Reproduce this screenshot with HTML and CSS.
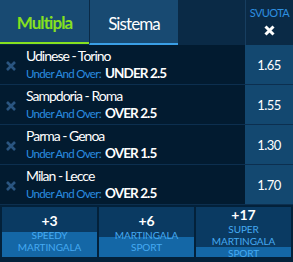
FILE: index.html
```html
<!DOCTYPE html>
<html lang="it">
<head>
<meta charset="utf-8">
<title>Schedina</title>
<link rel="stylesheet" href="styles.css">
</head>
<body>
<div class="slip">
  <div class="header">
    <div class="tab tab-active">Multipla</div>
    <div class="tab tab-system">Sistema</div>
    <div class="spacer"></div>
    <div class="clear">
      <span class="clear-label">SVUOTA</span>
      <svg class="clear-x" width="11" height="11" viewBox="0 0 11 11"><path d="M1.5 1.5 L9.5 9.5 M9.5 1.5 L1.5 9.5" stroke="#ffffff" stroke-width="3" stroke-linecap="butt"/></svg>
    </div>
  </div>
  <div class="rows">
    <div class="row">
      <div class="remove"><svg width="10" height="10" viewBox="0 0 10 10"><path d="M1 1 L9 9 M9 1 L1 9" stroke="#2a5580" stroke-width="2.6"/></svg></div>
      <div class="info">
        <div class="match">Udinese - Torino</div>
        <div class="market"><span class="mk">Under And Over:</span> <span class="pick">UNDER 2.5</span></div>
      </div>
      <div class="odd">1.65</div>
    </div>
    <div class="row">
      <div class="remove"><svg width="10" height="10" viewBox="0 0 10 10"><path d="M1 1 L9 9 M9 1 L1 9" stroke="#2a5580" stroke-width="2.6"/></svg></div>
      <div class="info">
        <div class="match">Sampdoria - Roma</div>
        <div class="market"><span class="mk">Under And Over:</span> <span class="pick">OVER 2.5</span></div>
      </div>
      <div class="odd">1.55</div>
    </div>
    <div class="row">
      <div class="remove"><svg width="10" height="10" viewBox="0 0 10 10"><path d="M1 1 L9 9 M9 1 L1 9" stroke="#2a5580" stroke-width="2.6"/></svg></div>
      <div class="info">
        <div class="match">Parma - Genoa</div>
        <div class="market"><span class="mk">Under And Over:</span> <span class="pick">OVER 1.5</span></div>
      </div>
      <div class="odd">1.30</div>
    </div>
    <div class="row">
      <div class="remove"><svg width="10" height="10" viewBox="0 0 10 10"><path d="M1 1 L9 9 M9 1 L1 9" stroke="#2a5580" stroke-width="2.6"/></svg></div>
      <div class="info">
        <div class="match">Milan - Lecce</div>
        <div class="market"><span class="mk">Under And Over:</span> <span class="pick">OVER 2.5</span></div>
      </div>
      <div class="odd">1.70</div>
    </div>
  </div>
  <div class="promos">
    <div class="promo" style="--fill:25px">
      <div class="promo-num">+3</div>
      <div class="promo-label">SPEEDY</div>
      <div class="promo-label">MARTINGALA</div>
    </div>
    <div class="promo" style="--fill:20px">
      <div class="promo-num">+6</div>
      <div class="promo-label">MARTINGALA</div>
      <div class="promo-label">SPORT</div>
    </div>
    <div class="promo" style="--fill:10px">
      <div class="promo-num">+17</div>
      <div class="promo-label">SUPER</div>
      <div class="promo-label">MARTINGALA</div>
      <div class="promo-label">SPORT</div>
    </div>
  </div>
</div>
</body>
</html>
```
FILE: styles.css
```css
html, body {
  margin: 0;
  padding: 0;
  background: #021b30;
}
body {
  font-family: Lato, "Noto Sans", sans-serif;
  width: 293px;
  height: 262px;
  overflow: hidden;
}
.slip {
  display: flex;
  flex-direction: column;
  width: 293px;
}
.header {
  display: flex;
  align-items: flex-start;
  height: 45px;
  background: #0a2a46;
}
.tab {
  width: 89px;
  box-sizing: border-box;
  display: flex;
  align-items: center;
  justify-content: center;
  background: #184a72;
  font-size: 17px;
  letter-spacing: -0.9px;
}
.tab-active {
  height: 44px;
  color: #86e020;
  font-weight: 700;
  border-bottom: 2px solid #86e020;
  padding-top: 2px;
}
.tab-system {
  height: 45px;
  color: #ffffff;
  border-left: 1px solid #0a2a46;
  border-bottom: 2px solid #3a9fe6;
  padding-top: 4px;
}
.spacer {
  flex: 1;
  height: 45px;
}
.clear {
  width: 48px;
  height: 45px;
  box-sizing: border-box;
  border-left: 1px solid #173e60;
  display: flex;
  flex-direction: column;
  align-items: center;
  padding-top: 6px;
  gap: 6px;
}
.clear-label {
  font-size: 11px;
  line-height: 13px;
  color: #2e8fe0;
  letter-spacing: -0.6px;
}
.clear-x {
  display: block;
}
.rows {
  display: flex;
  flex-direction: column;
}
.row {
  display: flex;
  height: 40px;
  box-sizing: border-box;
  border-bottom: 1px solid #0c2f4f;
}
.remove {
  width: 26px;
  display: flex;
  align-items: center;
  justify-content: center;
  padding-top: 3px;
  padding-right: 4px;
  box-sizing: border-box;
}
.remove svg {
  display: block;
}
.info {
  flex: 1;
  display: flex;
  flex-direction: column;
  justify-content: center;
  padding-bottom: 1px;
}
.match {
  color: #ffffff;
  font-size: 14px;
  line-height: 16px;
  letter-spacing: -1px;
}
.market {
  line-height: 15px;
  white-space: nowrap;
}
.mk {
  color: #2a8de0;
  font-size: 11.5px;
  letter-spacing: -0.7px;
}
.pick {
  color: #ffffff;
  font-size: 13.5px;
  font-weight: 700;
  letter-spacing: -0.9px;
}
.odd {
  width: 48px;
  background: #134870;
  color: #ffffff;
  font-size: 13px;
  letter-spacing: -0.6px;
  display: flex;
  align-items: center;
  justify-content: center;
}
.promos {
  display: flex;
  gap: 2px;
  padding: 2px 1px 0 2px;
  background: #03213a;
  height: 57px;
  box-sizing: border-box;
}
.promo {
  width: 95px;
  height: 50px;
  display: flex;
  flex-direction: column;
  align-items: center;
  justify-content: center;
  background: linear-gradient(to top, #1467a6 var(--fill), #0a3a62 var(--fill));
}
.promo-num {
  color: #ffffff;
  font-weight: 700;
  font-size: 14px;
  line-height: 17px;
}
.promo-label {
  color: #45aaf2;
  font-size: 10px;
  line-height: 12px;
  letter-spacing: -0.1px;
  text-align: center;
}
```
